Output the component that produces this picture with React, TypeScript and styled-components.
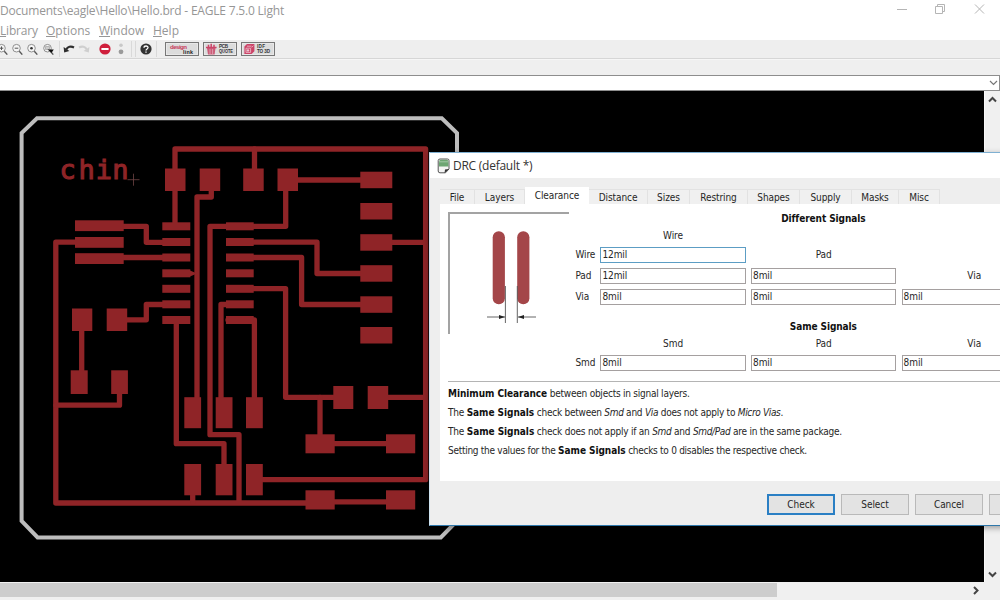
import React from "react";
import styled, { createGlobalStyle } from "styled-components";

const Global = createGlobalStyle`
  * { box-sizing: border-box; }
  html, body { margin: 0; padding: 0; overflow: hidden; background: #fff; }
`;

const uiFont = `"Open Sans", "Noto Sans", sans-serif`;
const dialogFont = `"DejaVu Sans Condensed", "DejaVu Sans", sans-serif`;

const Window = styled.div`
  position: relative;
  display: flex;
  flex-direction: column;
  width: 1000px;
  height: 600px;
  overflow: hidden;
  background: #fff;
`;

const TitleBar = styled.header`
  display: flex;
  justify-content: space-between;
  height: 21px;
  font: 12px/21px ${uiFont};
  color: #969696;
  white-space: pre;
`;

const TitleText = styled.span<{ $spacing: number }>`
  letter-spacing: ${(p) => p.$spacing}px;
`;

const MenuBar = styled.nav`
  display: flex;
  height: 19px;
  font: 12px/20px ${uiFont};
  color: #969696;
`;

const MenuItem = styled.span<{ $width: number; $spacing?: number }>`
  width: ${(p) => p.$width}px;
  letter-spacing: ${(p) => p.$spacing ?? 0}px;
  white-space: nowrap;
  &::first-letter { text-decoration: underline; }
`;

const ToolBar = styled.div`
  display: flex;
  align-items: center;
  height: 19px;
  background: #eeeeee;
  border-bottom: 1px solid #d6d6d6;
`;

const Tool = styled.span<{ $width: number; $end?: boolean }>`
  display: flex;
  justify-content: ${(p) => (p.$end ? "flex-end" : "center")};
  width: ${(p) => p.$width}px;
  flex: none;
  svg { flex: none; }
`;

const Separator = styled.i<{ $margin: string }>`
  width: 1px;
  height: 16px;
  margin: ${(p) => p.$margin};
  background: #d9d9d9;
`;

const ServiceButton = styled.span`
  display: flex;
  align-items: center;
  width: 34px;
  height: 14px;
  margin-right: 4px;
  border: 1px solid #777;
  background: #dcdcdc;
  box-shadow: inset 0 0 0 1px #e8e8e8;
`;

const SubBar = styled.div`
  height: 16px;
  background: #efefef;
  border-top: 1px solid #f6f6f6;
`;

const CommandLine = styled.div`
  display: flex;
  align-items: center;
  justify-content: flex-end;
  height: 16px;
  padding-right: 1px;
  border: solid #8d8d8d;
  border-width: 1px 1px 1px 0;
  background: #fff;
`;

const Work = styled.main`
  display: flex;
  height: 491px;
`;

const Board = styled.svg`
  display: block;
  flex: none;
  background: #000;
`;

const VScroll = styled.div`
  display: flex;
  flex-direction: column;
  justify-content: space-between;
  align-items: center;
  width: 16px;
  padding: 5px 0 4px 0;
  border-left: 1px solid #fafafa;
  background: #f0f0f0;
`;

const HScroll = styled.div`
  display: flex;
  justify-content: space-between;
  align-items: center;
  height: 18px;
  padding: 1px 21px 3px 0;
  background: #f0f0f0;
`;

const Thumb = styled.div`
  width: 777px;
  height: 14px;
  background: #cdcdcd;
`;

const Dialog = styled.section`
  position: absolute;
  left: 429px;
  top: 152px;
  display: flex;
  flex-direction: column;
  width: 640px;
  height: 374px;
  border: 1px solid #7fb0d2;
  border-left-color: #cfe3f0;
  border-bottom-color: #2f78ab;
  background: #eeeeee;
  font: 10px/14px ${dialogFont};
  letter-spacing: -0.08px;
  color: #262626;
  box-shadow: 0 2px 6px rgba(0, 0, 0, 0.35);
`;

const DialogTitle = styled.div`
  display: flex;
  align-items: center;
  gap: 3px;
  height: 25px;
  padding-left: 7px;
  background: #fff;
  font: 12px/25px ${uiFont};
  color: #333;
`;

const Tabs = styled.div`
  display: flex;
  align-items: flex-end;
  height: 26px;
  padding-left: 10px;
`;

const Tab = styled.span<{ $width: number; $active?: boolean }>`
  width: ${(p) => p.$width}px;
  height: ${(p) => (p.$active ? 17 : 15)}px;
  line-height: ${(p) => (p.$active ? 18 : 16)}px;
  border: solid #e2e2e2;
  border-width: ${(p) => (p.$active ? "0" : "1px 1px 0 0")};
  background: ${(p) => (p.$active ? "#fff" : "#f0f0f0")};
  text-align: center;
  white-space: nowrap;
`;

const Panel = styled.div`
  height: 277px;
  margin-left: 10px;
  padding: 8px 0 0 8px;
  background: #fff;
`;

const Top = styled.div`
  display: flex;
  height: 170px;
  border-bottom: 1px solid #b4b4b4;
`;

const Preview = styled.div`
  width: 121px;
  height: 122px;
  border: solid #a3a3a3;
  border-width: 2px 0 0 2px;
`;

const Fields = styled.div`
  display: grid;
  grid-template-columns: 25px repeat(3, 145.3px);
  grid-template-rows: 14px 20px 17px 4px 17px 4px 17px 15px 14px 20px 17px;
  align-items: center;
  padding-left: 6.4px;
`;

const Cell = styled.div<{ $col: number; $row: number }>`
  grid-column: ${(p) => p.$col};
  grid-row: ${(p) => p.$row};
  margin-left: ${(p) => (p.$col - 2 > 0 ? 5.3 * (p.$col - 2) : 0)}px;
  margin-right: ${(p) => (p.$col - 2 > 0 ? -5.3 * (p.$col - 2) : 0)}px;
  text-align: ${(p) => (p.$col > 1 ? "center" : "left")};
`;

const Heading = styled.b<{ $row: number }>`
  grid-column: 2 / 5;
  grid-row: ${(p) => p.$row};
  margin-right: -10px;
  text-align: center;
  color: #111;
`;

const Input = styled(Cell)<{ $focus?: boolean }>`
  height: 16px;
  padding-left: 1px;
  border: 1px solid ${(p) => (p.$focus ? "#5c9dc4" : "#a5a0a0")};
  background: #fff;
  line-height: 14px;
  text-align: left;
`;

const Note = styled.p<{ $spacing: number }>`
  margin: 0;
  height: 19px;
  line-height: 19px;
  letter-spacing: ${(p) => p.$spacing}px;
  white-space: nowrap;
  b { color: #111; letter-spacing: -0.05px; }
  i { letter-spacing: -0.35px; }
`;

const Notes = styled.div`
  padding-top: 2px;
`;

const Buttons = styled.div`
  display: flex;
  gap: 6px;
  padding: 13px 0 0 337px;
`;

const Button = styled.span<{ $primary?: boolean }>`
  flex: none;
  width: 68px;
  height: 21px;
  border: ${(p) => (p.$primary ? "2px solid #2a7fc4" : "1px solid #b9b9b9")};
  background: #e3e3e3;
  line-height: ${(p) => (p.$primary ? 18 : 20)}px;
  text-align: center;
`;

/* x, y, width, height of every copper pad */
const icRows = [222.3, 238, 253.5, 269.3, 284.8, 300.3, 316];
const pads: number[][] = [
  ...[165, 199.7, 243.2, 277.5].map((x) => [x, 168.5, 20.5, 22.5]),
  ...[171.7, 203, 234.2, 265.2, 296.3, 327].map((y) => [360.3, y, 32, 16.5]),
  ...icRows.map((y) => [162.3, y, 28, 8]),
  ...icRows.map((y) => [226, y, 27.7, 8]),
  ...[220.3, 237, 253.2].map((y) => [75, y, 48.7, 10.8]),
  [72, 308.5, 20.3, 22.5],
  [106.7, 308.5, 20.5, 22.5],
  [70.7, 370.3, 17, 23.7],
  [111.2, 370.3, 16.7, 23.7],
  ...[184.3, 215.7, 246].flatMap((x) => [
    [x, 397.2, 16.8, 31],
    [x, 464, 16.8, 31.3],
  ]),
  [333.3, 386, 20, 23],
  [367.7, 386, 20.5, 23],
  ...[305.5, 386].flatMap((x) => [
    [x, 434.3, 29.2, 19],
    [x, 490.3, 29.2, 19.2],
  ]),
];

const traces = [
  "M175 180V149H425.6V479.7H254",
  "M175 180V226",
  "M211.3 180V197H197V410H192",
  "M254.5 149V180",
  "M288 180H376",
  "M285.7 180V226.3H210V434.7H239V502",
  "M376 242.3H425",
  "M100 226.3H146.3V242.3H176",
  "M100 257.5H176",
  "M100 242.2H55.8V503H320",
  "M116 319.8H146.3V304.5H176",
  "M81.7 320V380",
  "M119.5 382V405.2H56",
  "M176.3 320V443.7H224V480",
  "M192.7 480V502",
  "M240 304.5H221V410",
  "M228 320H254.4V410",
  "M240 242.2H317V273.5H376",
  "M240 257.5H301.6V304.5H376",
  "M240 288.7H285.6V397.3H343",
  "M378 397.3H425",
  "M320 397.3V443.7H400",
  "M320 501.8H400",
];

const BoardCanvas = () => (
  <Board width="984" height="491" viewBox="0 91 984 491">
    <path
      d="M37 118.3H441.8L457 133V521L440.8 537.5H37.6L21.6 521V133Z"
      fill="none"
      stroke="#bdbdbd"
      strokeWidth="4"
    />
    <g fill="none" stroke="#8f2427" strokeWidth="5.3" strokeLinecap="round" strokeLinejoin="round">
      {traces.map((d) => (
        <path key={d} d={d} />
      ))}
    </g>
    <path d="M190 270.5L197 273.4L190 276.5Z" fill="#8f2427" />
    {pads.map(([x, y, w, h]) => (
      <rect key={`${x}-${y}`} x={x} y={y} width={w} height={h} fill="#8f2427" />
    ))}
    <text
      x="59.4 78.6 95.8 112.2"
      y="179.2"
      fill="#8f2427"
      stroke="#8f2427"
      strokeWidth="1.1"
      fontFamily="DejaVu Sans Mono, monospace"
      fontSize="27"
    >
      chin
    </text>
    <path d="M127.5 179.7H139.5M133.5 173.7V185.7" stroke="#6e4444" strokeWidth="0.8" />
  </Board>
);

const Magnifier = ({ mark }: { mark: "minus" | "dot" | "select" | "plus" }) => (
  <svg width="13" height="13" viewBox="0 0 13 13" fill="none">
    <circle cx="5.5" cy="5.2" r="3.8" stroke="#858585" strokeWidth="0.9" fill="#f6f6f6" />
    <path d="M8.3 8.2L11.3 11.6" stroke="#555" strokeWidth="1.4" />
    {mark === "minus" && <path d="M3.7 5.2H7.3" stroke="#555" />}
    {mark === "plus" && <path d="M3.7 5.2H7.3M5.5 3.4V7" stroke="#555" />}
    {mark === "dot" && <circle cx="5.5" cy="5.2" r="1.3" fill="#333" />}
    {mark === "select" && (
      <>
        <path d="M3.5 3.5H7.5V6.5H3.5Z" fill="#ccc" stroke="#999" strokeWidth="0.6" />
        <path d="M5.5 6.4H11.8L9.6 9.8Z" fill="#111" />
      </>
    )}
  </svg>
);

const CurvedArrow = ({ color, flip }: { color: string; flip?: boolean }) => (
  <svg width="12" height="10" viewBox="0 0 12 10">
    <g transform={flip ? "translate(12 0) scale(-1 1)" : undefined}>
      <path d="M3.2 5.6C4.6 2.6 7.8 1.8 11 3.4" fill="none" stroke={color} strokeWidth="2.2" />
      <path d="M0.6 3L1.2 8.6L6.4 7Z" fill={color} />
    </g>
  </svg>
);

const Chevron = ({ d, w, h, color = "#444", sw = 2 }: { d: string; w: number; h: number; color?: string; sw?: number }) => (
  <svg width={w} height={h} viewBox={`0 0 ${w} ${h}`}>
    <path d={d} fill="none" stroke={color} strokeWidth={sw} />
  </svg>
);

const tinyFont = { fontFamily: "Liberation Sans, sans-serif", fontWeight: 700 } as const;

const DesignLink = () => (
  <svg width="32" height="12" viewBox="0 0 32 12">
    <text x="4" y="6.2" fontSize="6.2" textLength="17" fill="#c8385c" {...tinyFont}>design</text>
    <text x="17" y="10.8" fontSize="5.4" textLength="10" fill="#222" {...tinyFont}>link</text>
  </svg>
);

const PcbQuote = () => (
  <svg width="32" height="12" viewBox="0 0 32 12">
    <path d="M3 5H11.5L10.6 11.5H4Z" fill="#cc5c78" />
    <path d="M2 4.6H12.6M4.5 1.8V4M7.2 0.8V4M10 1.8V4" stroke="#cc4468" strokeWidth="1.5" />
    <path d="M6 6V11M8.6 6V11" stroke="#e7b6c3" strokeWidth="0.7" />
    <text x="15" y="5.4" fontSize="4.6" textLength="9" fill="#333" {...tinyFont}>PCB</text>
    <text x="15" y="10.2" fontSize="4.6" textLength="14" lengthAdjust="spacingAndGlyphs" fill="#333" {...tinyFont}>QUOTE</text>
  </svg>
);

const IdfTo3d = () => (
  <svg width="32" height="12" viewBox="0 0 32 12">
    <path d="M2.4 3.4L5 1H12.4V8.2L9.6 11H2.4Z" fill="#cc4468" />
    <path d="M4 5.2H8.6V9.4H4ZM9.6 4.4L11.4 2.7M5 3.2H9.5" stroke="#eec3ce" strokeWidth="0.8" fill="none" />
    <circle cx="6" cy="7.4" r="1.2" fill="#eec3ce" />
    <text x="15" y="5.4" fontSize="4.6" textLength="8" fill="#333" {...tinyFont}>IDF</text>
    <text x="15" y="10.2" fontSize="4.6" textLength="13" fill="#333" {...tinyFont}>TO 3D</text>
  </svg>
);

const tabs: [string, number][] = [
  ["File", 35],
  ["Layers", 50],
  ["Clearance", 64],
  ["Distance", 59],
  ["Sizes", 42],
  ["Restring", 58],
  ["Shapes", 52],
  ["Supply", 52],
  ["Masks", 47],
  ["Misc", 41],
];

export default function App() {
  return (
    <Window>
      <Global />
      <TitleBar>
        <TitleText $spacing={-0.2}>{"Documents\\eagle\\Hello\\Hello.brd - EAGLE 7.5.0 Light"}</TitleText>
        <svg width="110" height="18" viewBox="0 0 110 18" fill="none" stroke="#b5b5b5">
          <path d="M7 9.5H17" />
          <path d="M45.5 6.5H52.5V13.5H45.5ZM47.5 6V4.5H54.5V11.5H53" />
          <path d="M85 4.5L94 13.5M94 4.5L85 13.5" />
        </svg>
      </TitleBar>
      <MenuBar>
        <MenuItem $width={46} $spacing={-0.2}>Library</MenuItem>
        <MenuItem $width={53}>Options</MenuItem>
        <MenuItem $width={54}>Window</MenuItem>
        <MenuItem $width={40}>Help</MenuItem>
      </MenuBar>
      <ToolBar>
        <Tool $width={9} $end><Magnifier mark="plus" /></Tool>
        <Tool $width={16}><Magnifier mark="minus" /></Tool>
        <Tool $width={15}><Magnifier mark="dot" /></Tool>
        <Tool $width={16}><Magnifier mark="select" /></Tool>
        <Separator $margin="0 3px 0 3px" />
        <Tool $width={11}><CurvedArrow color="#2e2e2e" /></Tool>
        <Tool $width={20}><CurvedArrow color="#cfcfcf" flip /></Tool>
        <Tool $width={21}>
          <svg width="12" height="12" viewBox="0 0 12 12">
            <circle cx="6" cy="6" r="5.6" fill="#cf1f3c" />
            <path d="M2.4 6H9.6" stroke="#fff" strokeWidth="2" />
          </svg>
        </Tool>
        <Tool $width={11}>
          <svg width="8" height="12" viewBox="0 0 8 12">
            <circle cx="4" cy="2.2" r="1.8" fill="#c8c8c8" />
            <circle cx="4" cy="8.8" r="2.4" fill="#9a9a9a" />
          </svg>
        </Tool>
        <Separator $margin="0 3px 0 5px" />
        <Separator $margin="0 0 0 0" />
        <Tool $width={20}>
          <svg width="12" height="12" viewBox="0 0 12 12">
            <circle cx="6" cy="6" r="5.6" fill="#333" />
            <path d="M4 4.8C4 2.4 8.2 2.4 8 4.8C7.9 6 6 6 6 7.4M6 8.4V9.8" stroke="#fff" strokeWidth="1.3" fill="none" />
          </svg>
        </Tool>
        <Separator $margin="0 8px 0 0" />
        <ServiceButton><DesignLink /></ServiceButton>
        <ServiceButton><PcbQuote /></ServiceButton>
        <ServiceButton><IdfTo3d /></ServiceButton>
      </ToolBar>
      <SubBar />
      <CommandLine>
        <Chevron w={9} h={6} d="M1 1L4.5 4.5L8 1" color="#777" sw={1.2} />
      </CommandLine>
      <Work>
        <BoardCanvas />
        <VScroll>
          <Chevron w={9} h={7} d="M1 5.5L4.5 2L8 5.5" />
          <Chevron w={9} h={7} d="M1 1.5L4.5 5L8 1.5" />
        </VScroll>
      </Work>
      <HScroll>
        <Thumb />
        <Chevron w={6} h={9} d="M1 1L4.5 4.5L1 8" />
      </HScroll>

      <Dialog>
        <DialogTitle>
          <svg width="13" height="16" viewBox="0 0 13 16">
            <path d="M3 1H10.5Q12 1 12 2.5V11L8.5 14.8H3Q1.2 14.8 1.2 13V2.5Q1.2 1 3 1Z" fill="#f4f4f4" stroke="#555" />
            <path d="M2 3.5Q2 1.7 4 1.7H9.5Q11.4 1.7 11.4 3.5V8.5H2Z" fill="#6da673" />
            <path d="M2 3.8H11.4" stroke="#a9cdac" strokeWidth="0.9" />
            <path d="M7.6 15L8 11.4L12 11Z" fill="#333" />
          </svg>
          <TitleText $spacing={-0.25}>DRC (default *)</TitleText>
        </DialogTitle>
        <Tabs>
          {tabs.map(([name, width]) => (
            <Tab key={name} $width={width} $active={name === "Clearance"}>{name}</Tab>
          ))}
        </Tabs>
        <Panel>
          <Top>
            <Preview>
              <svg width="119" height="120" viewBox="450 214 119 120">
                <rect x="492.7" y="231.2" width="12.2" height="73" rx="6" fill="#a44649" />
                <rect x="517.2" y="231.2" width="12.2" height="73" rx="6" fill="#a44649" />
                <path d="M505.4 286V323M517.3 286V323M487 317H505M518 317H536" stroke="#555" strokeWidth="0.9" fill="none" />
                <path d="M499 315L505 317L499 319ZM524 315L518 317L524 319Z" fill="#222" />
              </svg>
            </Preview>
            <Fields>
              <Heading $row={1}>Different Signals</Heading>
              <Cell $col={2} $row={2}>Wire</Cell>
              <Cell $col={1} $row={3}>Wire</Cell>
              <Input $col={2} $row={3} $focus>12mil</Input>
              <Cell $col={3} $row={3}>Pad</Cell>
              <Cell $col={1} $row={5}>Pad</Cell>
              <Input $col={2} $row={5}>12mil</Input>
              <Input $col={3} $row={5}>8mil</Input>
              <Cell $col={4} $row={5}>Via</Cell>
              <Cell $col={1} $row={7}>Via</Cell>
              <Input $col={2} $row={7}>8mil</Input>
              <Input $col={3} $row={7}>8mil</Input>
              <Input $col={4} $row={7}>8mil</Input>
              <Heading $row={9}>Same Signals</Heading>
              <Cell $col={2} $row={10}>Smd</Cell>
              <Cell $col={3} $row={10}>Pad</Cell>
              <Cell $col={4} $row={10}>Via</Cell>
              <Cell $col={1} $row={11}>Smd</Cell>
              <Input $col={2} $row={11}>8mil</Input>
              <Input $col={3} $row={11}>8mil</Input>
              <Input $col={4} $row={11}>8mil</Input>
            </Fields>
          </Top>
          <Notes>
            <Note $spacing={-0.24}><b>Minimum Clearance</b> between objects in signal layers.</Note>
            <Note $spacing={-0.24}>The <b>Same Signals</b> check between <i>Smd</i> and <i>Via</i> does not apply to <i>Micro Vias</i>.</Note>
            <Note $spacing={-0.22}>The <b>Same Signals</b> check does not apply if an <i>Smd</i> and <i>Smd/Pad</i> are in the same package.</Note>
            <Note $spacing={-0.28}>Setting the values for the <b>Same Signals</b> checks to 0 disables the respective check.</Note>
          </Notes>
        </Panel>
        <Buttons>
          <Button $primary>Check</Button>
          <Button>Select</Button>
          <Button>Cancel</Button>
          <Button />
        </Buttons>
      </Dialog>
    </Window>
  );
}
